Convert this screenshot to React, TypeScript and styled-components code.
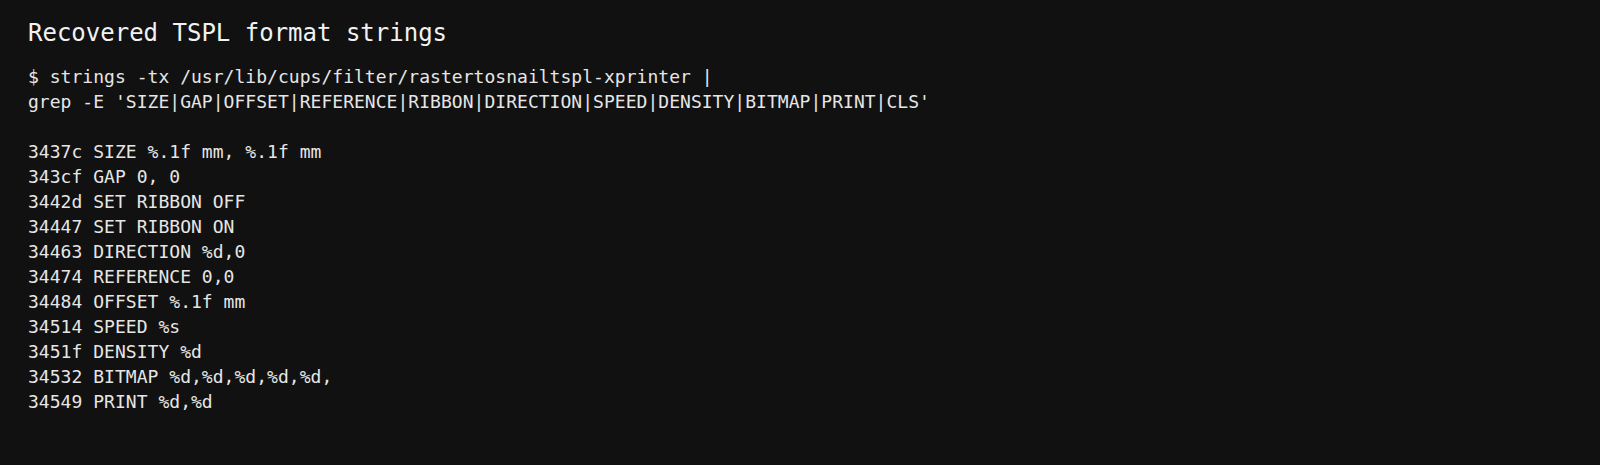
import React from "react";
import styled, { createGlobalStyle } from "styled-components";

const Global = createGlobalStyle`
  html, body { margin: 0; padding: 0; background: #111111; }
  body { font-family: "DejaVu Sans Mono", monospace; }
`;

const Page = styled.div`
  width: 1600px;
  height: 465px;
  box-sizing: border-box;
  padding: 17px 28px 0;
  background: #111111;
  color: #e6e6e6;
  overflow: hidden;
`;

const Title = styled.h1`
  margin: 0 0 15px;
  font-family: "DejaVu Sans Mono", monospace;
  font-size: 24px;
  font-weight: normal;
  line-height: 32px;
  color: #f2f2f2;
`;

const Output = styled.pre`
  margin: 0;
  font-family: "DejaVu Sans Mono", monospace;
  font-size: 18px;
  line-height: 25px;
  letter-spacing: 0.03px;
  color: #e6e6e6;
  white-space: pre;
`;

const text = `$ strings -tx /usr/lib/cups/filter/rastertosnailtspl-xprinter |
grep -E 'SIZE|GAP|OFFSET|REFERENCE|RIBBON|DIRECTION|SPEED|DENSITY|BITMAP|PRINT|CLS'

3437c SIZE %.1f mm, %.1f mm
343cf GAP 0, 0
3442d SET RIBBON OFF
34447 SET RIBBON ON
34463 DIRECTION %d,0
34474 REFERENCE 0,0
34484 OFFSET %.1f mm
34514 SPEED %s
3451f DENSITY %d
34532 BITMAP %d,%d,%d,%d,%d,
34549 PRINT %d,%d`;

export default function App() {
  return (
    <Page>
      <Global />
      <Title>Recovered TSPL format strings</Title>
      <Output>{text}</Output>
    </Page>
  );
}
